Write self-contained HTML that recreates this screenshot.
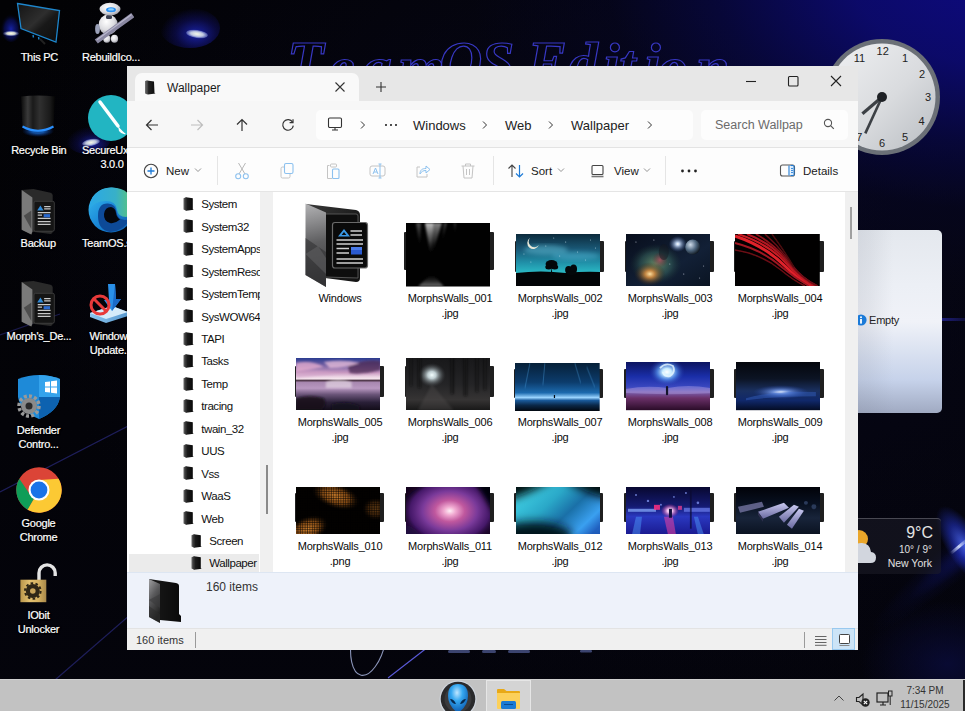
<!DOCTYPE html>
<html><head><meta charset="utf-8">
<style>
*{margin:0;padding:0;box-sizing:border-box}
html,body{width:965px;height:711px;overflow:hidden}
body{position:relative;font-family:"Liberation Sans",sans-serif;background:#020207}
.a{position:absolute}
#bg{left:0;top:0;width:965px;height:711px;
 background:
  radial-gradient(ellipse 540px 320px at 1010px -30px, rgba(14,10,130,1) 0%, rgba(12,10,112,0.92) 30%, rgba(8,8,72,0.7) 55%, rgba(6,6,40,0.4) 75%, rgba(0,0,0,0) 100%),
  radial-gradient(ellipse 700px 500px at 700px 200px, rgba(10,10,40,0.6) 0%, rgba(0,0,0,0) 100%),
  linear-gradient(180deg,#020204 0%,#030308 60%,#04040c 100%);}
.dl{color:#fff;font-size:11px;letter-spacing:-0.25px;text-align:center;line-height:14px;text-shadow:0 0 2px #000,1px 1px 1px #000;white-space:nowrap;-webkit-text-stroke:0.2px #fff}
#win{left:127px;top:66px;width:731px;height:584px;background:#fff;overflow:hidden}
#title{left:0;top:0;width:731px;height:35px;background:#e7e7e7}
#tab{left:8px;top:7px;width:224px;height:29px;background:#f9f9f9;border-radius:7px 7px 0 0}
#nav{left:0;top:35px;width:731px;height:47px;background:#f7f7f7;border-bottom:1px solid #e3e3e3}
#addr{left:189px;top:44px;width:377px;height:30px;background:#fdfdfd;border-radius:5px}
#search{left:574px;top:44px;width:147px;height:30px;background:#fdfdfd;border-radius:5px}
#cmd{left:0;top:82px;width:731px;height:44px;background:#fdfdfd;border-bottom:1px solid #e5e5e5}
.t{color:#1a1a1a;white-space:nowrap}
.lbl{width:100px;text-align:center;font-size:11px;line-height:15px;letter-spacing:-0.2px;color:#0a0a0a;padding-top:0.5px}
#navpane{left:0;top:126px;width:133px;height:380px;background:#fff;overflow:hidden}
#navtrack{left:133px;top:126px;width:13px;height:380px;background:#f0f0f0}
#content{left:147px;top:126px;width:571px;height:380px;background:#fff;overflow:hidden}
#ctrack{left:718px;top:126px;width:13px;height:380px;background:#f0f0f0}
#details{left:0;top:506px;width:731px;height:56px;background:#eef2fa;border-top:1px solid #dde6f2}
#status{left:0;top:562px;width:731px;height:22px;background:#f0f0f0;border-top:1px solid #e3e3e3}
#taskbar{left:0;top:679px;width:965px;height:32px;background:#c2c2c2;border-top:1px solid #d0d0d0}
</style></head>
<body>
<svg width="0" height="0" style="position:absolute">
 <defs>
  <linearGradient id="nfg" x1="0" x2="1" y1="0" y2="0"><stop offset="0" stop-color="#6a6a6a"/><stop offset="0.3" stop-color="#1e1e1e"/><stop offset="1" stop-color="#050505"/></linearGradient>
  <g id="nfold">
   <path d="M0.5 1.2 L3 0.3 L9.8 1.2 L9.8 12.3 L10.8 12.8 L3.2 13.8 L0.5 12.6 Z" fill="url(#nfg)"/>
   <path d="M3 0.5 L3.2 13.6" stroke="#3a3a3a" stroke-width="0.7"/>
  </g>
 </defs>
</svg>
<div id="bg" class="a"></div>


<!-- bottom-right streak -->
<div class="a" style="left:850px;top:545px;width:200px;height:40px;border-radius:50%;transform:rotate(-40deg);background:radial-gradient(ellipse at 80% 50%, rgba(35,50,220,0.75) 0%, rgba(20,28,150,0.4) 22%, rgba(12,16,90,0.15) 50%, rgba(0,0,0,0) 72%)"></div>
<div class="a" style="left:946px;top:500px;width:36px;height:90px;border-radius:50%;transform:rotate(-32deg);background:radial-gradient(ellipse at center, rgba(80,110,255,0.8) 0%, rgba(40,60,230,0.5) 35%, rgba(0,0,0,0) 70%)"></div>
<div class="a" style="left:948px;top:545px;width:22px;height:3px;transform:rotate(-40deg);background:linear-gradient(90deg,rgba(255,255,255,0),rgba(220,230,255,0.9),rgba(255,255,255,0))"></div>
<div class="a" style="left:860px;top:600px;width:110px;height:80px;background:radial-gradient(ellipse at 80% 80%, rgba(10,12,60,0.8), rgba(0,0,0,0) 70%)"></div>
<!-- wallpaper glow spots -->
<div class="a" style="left:160px;top:8px;width:60px;height:40px;border-radius:50%;background:radial-gradient(ellipse at 60% 65%, rgba(30,40,200,0.8) 0%, rgba(20,20,140,0.4) 40%, rgba(0,0,0,0) 70%)"></div>
<div class="a" style="left:186px;top:30px;width:22px;height:8px;border-radius:50%;transform:rotate(8deg);background:radial-gradient(ellipse at center, #f4f8e8 0%, rgba(220,230,240,0.85) 40%, rgba(120,140,255,0.3) 75%, rgba(0,0,0,0) 100%)"></div>
<div class="a" style="left:66px;top:126px;width:44px;height:28px;border-radius:50%;background:radial-gradient(ellipse at 60% 65%, rgba(30,40,200,0.7) 0%, rgba(20,20,140,0.3) 40%, rgba(0,0,0,0) 70%)"></div>
<div class="a" style="left:82px;top:139px;width:18px;height:7px;border-radius:50%;transform:rotate(-10deg);background:radial-gradient(ellipse at center, #f4f8e8 0%, rgba(220,230,240,0.85) 40%, rgba(120,140,255,0.3) 75%, rgba(0,0,0,0) 100%)"></div>
<!-- TeamOS outline text -->
<svg class="a" style="left:270px;top:20px" width="480" height="60" viewBox="0 0 480 60">
 <text font-family="Liberation Serif" font-style="italic" font-weight="bold" font-size="60" fill="none" stroke="#3838c4" stroke-width="1.2"><tspan x="17" y="62">T</tspan><tspan x="58" y="67">e</tspan><tspan x="92" y="67">a</tspan><tspan x="128" y="67">m</tspan><tspan x="169" y="62">O</tspan><tspan x="211" y="62">S</tspan><tspan x="257" y="62">E</tspan><tspan x="298" y="63">d</tspan><tspan x="333" y="64">i</tspan><tspan x="349" y="65">t</tspan><tspan x="374" y="64">i</tspan><tspan x="388" y="67">o</tspan><tspan x="426" y="67">n</tspan></text>
</svg>
<svg class="a" style="left:330px;top:600px" width="300" height="80" viewBox="0 0 300 80">
 <ellipse cx="39" cy="38" rx="17" ry="38" fill="none" stroke="#8a94b8" stroke-width="1.1" transform="rotate(12 39 38)"/>
 <path d="M58 78 L98 47" stroke="#5a5ad8" stroke-width="1.1"/>
 <g fill="#6a7ac0" opacity="0.55"><rect x="118" y="50" width="22" height="3" rx="1.5"/><rect x="152" y="50" width="14" height="3" rx="1.5"/><rect x="178" y="50" width="22" height="3" rx="1.5"/><rect x="250" y="50" width="12" height="2.5" rx="1.2"/></g>
</svg>
<svg class="a" style="left:0px;top:200px" width="130" height="500" viewBox="0 0 130 500">
 <path d="M0 135 L60 114" stroke="#1a1a4a" stroke-width="1.2"/>
 <path d="M0 292 L130 225" stroke="#1e1e5a" stroke-width="1.2"/>
 <path d="M55 480 L130 415" stroke="#1e1e5a" stroke-width="1.2"/>
</svg>
<!-- clock -->
<svg class="a" style="left:822px;top:37px" width="120" height="120" viewBox="-60 -60 120 120">
 <defs><linearGradient id="cf" x1="0" x2="1" y1="0" y2="1"><stop offset="0" stop-color="#f0f1f3"/><stop offset="0.55" stop-color="#d9dbde"/><stop offset="1" stop-color="#b9bdc2"/></linearGradient></defs>
 <circle r="58" fill="#6b7077"/>
 <circle r="53.5" fill="url(#cf)"/>
 <g font-family="Liberation Sans" font-size="11" fill="#222" text-anchor="middle" dominant-baseline="central">
  <text x="0.7" y="-46.3">12</text><text x="23" y="-39.4">1</text><text x="40" y="-22.7">2</text><text x="46" y="0">3</text>
  <text x="39.5" y="23.6">4</text><text x="23" y="40.4">5</text><text x="0" y="46.3">6</text><text x="-22.6" y="40.4">7</text>
  <text x="-39.5" y="23.6">8</text><text x="-46" y="0">9</text><text x="-40" y="-22.7">10</text><text x="-22.6" y="-39.4">11</text>
 </g>
 <path d="M0 0 L-19.6 16.7" stroke="#3c4045" stroke-width="3.2" stroke-linecap="butt"/>
 <path d="M0 0 L-16.7 36.4" stroke="#3c4045" stroke-width="2.6"/>
 <circle r="5" fill="#1e2125"/>
</svg>
<!-- empty gadget -->
<div class="a" style="left:820px;top:230px;width:122px;height:183px;border-radius:5px;background:linear-gradient(90deg,rgba(120,125,140,0.28) 0%,rgba(120,125,140,0.12) 40%,rgba(255,255,255,0) 60%),linear-gradient(180deg,#e4e8ee 0%,#eceff5 30%,#f0f2f8 50%,#d8e0f0 68%,#c6d2ea 82%,#a0aac2 100%)"></div>
<div class="a" style="left:942px;top:318px;width:23px;height:3px;background:linear-gradient(90deg,rgba(40,40,160,0.7),rgba(30,30,120,0.4))"></div>
<svg class="a" style="left:855px;top:314px" width="12" height="12" viewBox="0 0 12 12"><circle cx="6" cy="6" r="5.6" fill="#1a7ad8"/><rect x="5.1" y="5" width="1.8" height="4.6" fill="#fff"/><circle cx="6" cy="3.2" r="1" fill="#fff"/></svg>
<div class="a" style="left:869px;top:313px;font-size:11px;line-height:14px;color:#222;letter-spacing:-0.2px">Empty</div>
<!-- weather -->
<div class="a" style="left:830px;top:518px;width:111px;height:56px;border-radius:4px;background:rgba(30,30,40,0.55);border-top:1px solid rgba(110,110,120,0.6)"></div>
<svg class="a" style="left:842px;top:524px" width="40" height="40" viewBox="0 0 40 40">
 <circle cx="17" cy="15" r="9" fill="#eaa62a"/>
 <path d="M9 39 Q3 39 3 33 Q3 27 9.5 27 Q11.5 18.5 20 19 Q28 19.5 29 28 Q34 28.5 34 33.5 Q34 39 28.5 39 Z" fill="#d2d6de"/>
</svg>
<div class="a" style="left:880px;top:523px;width:53px;text-align:right;font-size:16px;line-height:20px;color:#e4e4e4">9&deg;C</div>
<div class="a" style="left:880px;top:544px;width:52px;text-align:right;font-size:10px;line-height:12px;color:#e0e0e0">10&deg; / 9&deg;</div>
<div class="a" style="left:870px;top:557px;width:62px;text-align:right;font-size:10.5px;line-height:13px;color:#e0e0e0">New York</div>
<div id="desk">
<svg class="a" style="left:0px;top:0px" width="64" height="46" viewBox="0 0 64 46">
 <defs><radialGradient id="glow1" cx="0.5" cy="0.5" r="0.5"><stop offset="0" stop-color="#fbfbe8"/><stop offset="0.5" stop-color="#e0e4d8" stop-opacity="0.9"/><stop offset="1" stop-color="#6070d0" stop-opacity="0"/></radialGradient>
 <radialGradient id="halo1" cx="0.5" cy="0.6" r="0.5"><stop offset="0" stop-color="#1a28c0" stop-opacity="0.85"/><stop offset="0.6" stop-color="#0c1480" stop-opacity="0.5"/><stop offset="1" stop-color="#000" stop-opacity="0"/></radialGradient>
 <linearGradient id="scr1" x1="0" x2="1" y1="0" y2="1"><stop offset="0" stop-color="#141414"/><stop offset="0.45" stop-color="#2e2e2e"/><stop offset="0.6" stop-color="#181818"/><stop offset="1" stop-color="#0c0c0c"/></linearGradient></defs>
 <ellipse cx="11" cy="26" rx="11" ry="16" fill="url(#halo1)"/><ellipse cx="11" cy="33.5" rx="8.5" ry="3" fill="url(#glow1)"/>
 <path d="M17.5 3.5 L59.5 10.5 L56 42 L21 28.5 Z" fill="url(#scr1)" stroke="#1e86cc" stroke-width="1.3"/>
 <path d="M33 35 L33.5 37.5 M38.5 37 L39 39.5" stroke="#1e86cc" stroke-width="1.4"/>
 <path d="M40 39 L45 44" stroke="#222" stroke-width="2"/>
</svg>
<div class="a dl" style="left:-0.7px;top:49.7px;width:80px">This PC</div>
<svg class="a" style="left:92px;top:1px" width="42" height="45" viewBox="0 0 42 45">
 <defs><radialGradient id="rbw" cx="0.4" cy="0.35" r="0.7"><stop offset="0" stop-color="#ffffff"/><stop offset="0.6" stop-color="#dcdce0"/><stop offset="1" stop-color="#9a9aa4"/></radialGradient></defs>
 <ellipse cx="14.8" cy="37.7" rx="3.6" ry="4" fill="url(#rbw)"/>
 <ellipse cx="22.5" cy="37.7" rx="3.6" ry="4" fill="url(#rbw)"/>
 <ellipse cx="16.2" cy="23.6" rx="9.5" ry="10" fill="url(#rbw)"/>
 <ellipse cx="5.5" cy="28" rx="2.4" ry="5" fill="#9aa0b8"/>
 <rect x="14" y="14" width="6" height="4" rx="1.5" fill="#3a3f50"/>
 <ellipse cx="18" cy="8.1" rx="10.5" ry="6.3" fill="url(#rbw)"/>
 <ellipse cx="19" cy="8.8" rx="5" ry="2.5" fill="#2a8ff0"/>
 <ellipse cx="19" cy="8.4" rx="3" ry="1.2" fill="#8ad0ff"/>
 <path d="M4.3 40.5 L40.8 14.1" stroke="#8a88a2" stroke-width="5.2"/>
 <path d="M5 38.8 L39.5 13.6" stroke="#b8b6cc" stroke-width="1.3"/>
</svg>
<div class="a dl" style="left:71.0px;top:49.7px;width:80px">RebuildIco...</div>
<svg class="a" style="left:18px;top:94px" width="40" height="46" viewBox="0 0 40 46">
 <defs><linearGradient id="rb1" x1="0" x2="1"><stop offset="0" stop-color="#0a0a0a"/><stop offset="0.2" stop-color="#3a3a3a"/><stop offset="0.35" stop-color="#1a1a1a"/><stop offset="0.55" stop-color="#303030"/><stop offset="0.85" stop-color="#1a1a1a"/><stop offset="1" stop-color="#050505"/></linearGradient>
 <radialGradient id="rbg" cx="0.5" cy="0.5" r="0.5"><stop offset="0.4" stop-color="#1a70e0"/><stop offset="1" stop-color="#0a3aa0" stop-opacity="0"/></radialGradient></defs>
 <ellipse cx="20" cy="37" rx="16" ry="6" fill="url(#rbg)" opacity="0.7"/>
 <path d="M3 2.5 Q20 0.5 37 2.5 L35.5 33 Q20 40 4.5 33 Z" fill="url(#rb1)"/>
 <path d="M4.5 32.5 Q20 41 35.5 32.5" fill="none" stroke="#2a90ff" stroke-width="2"/>
</svg>
<div class="a dl" style="left:-1.2px;top:143.3px;width:80px">Recycle Bin</div>
<svg class="a" style="left:88px;top:94px" width="48" height="48" viewBox="0 0 48 48">
 <circle cx="23" cy="24" r="23" fill="#22b5c2"/>
 <path d="M12 8 L30 32" stroke="#fff" stroke-width="3.5" stroke-linecap="round"/>
 <path d="M30 32 Q35 38 38 40 Q34 41 31 37 Z" fill="#fff"/>
</svg>
<div class="a dl" style="left:82px;top:143.3px;width:80px;text-align:left">SecureUxTheme</div><div class="a dl" style="left:72px;top:157.1px;width:80px">3.0.0</div>
<svg class="a" style="left:20px;top:189px" width="36" height="46" viewBox="0 0 65 86">
 <path d="M2 2 L24 0 L56 7 Q60 8 60 12 L60 80 Q60 84 56 84 L22 80 L20 85 L2 76 Z" fill="#2a2a2a"/>
 <path d="M2 2 L22 16 L22 80 L20 85 L2 76 Z" fill="#7a7a7a"/>
 <path d="M6 50 L20 40 L20 75 Z" fill="#3a3a3a" opacity="0.7"/>
 <rect x="25" y="23" width="38" height="56" rx="3" fill="#151515" stroke="#444" stroke-width="1.5"/>
 <path d="M31 40 L37 31 L43 40 Z" fill="#2f8ad8"/>
 <path d="M44 33H56M44 37H56M32 44H56M32 49H40M32 55H56M32 61H56M32 66H56" stroke="#c8c8c8" stroke-width="2.4"/>
 <rect x="43" y="47" width="12" height="6" fill="#2a6ad0"/>
</svg>
<div class="a dl" style="left:-1.8px;top:235.6px;width:80px">Backup</div>
<svg class="a" style="left:88px;top:186px" width="46" height="48" viewBox="0 0 46 48">
 <defs><linearGradient id="ed1" x1="0" x2="1" y1="0" y2="1"><stop offset="0" stop-color="#3ac0f0"/><stop offset="0.5" stop-color="#1a88d8"/><stop offset="1" stop-color="#0c58a8"/></linearGradient>
 <linearGradient id="ed2" x1="0" x2="1" y1="0" y2="0"><stop offset="0" stop-color="#2aa8e8"/><stop offset="0.6" stop-color="#38b0c8"/><stop offset="1" stop-color="#60c870"/></linearGradient></defs>
 <circle cx="23" cy="24" r="22.5" fill="url(#ed1)"/>
 <path d="M1 24 Q3 2 24 1.5 Q44 2 45.5 22 Q45 30 38 31 Q30 31 29 24 Q28 15 18 15 Q6 15 1 24Z" fill="url(#ed2)"/>
 <path d="M10 30 Q10 17 20 17.5 Q28 18 28.5 26 Q29 33 37 34 Q40 34 42 33 Q36 45 22 46 Q10 44 10 30Z" fill="#0d4a98"/>
 <path d="M16 28 Q17 21 23 21 Q27.5 22 28 27 Q28.5 31 32 33.5 Q27 38 22 37 Q15.5 35 16 28Z" fill="#05070c"/>
</svg>
<div class="a dl" style="left:71.0px;top:235.6px;width:80px">TeamOS.s...</div>
<svg class="a" style="left:20px;top:281px" width="36" height="46" viewBox="0 0 65 86">
 <path d="M2 2 L24 0 L56 7 Q60 8 60 12 L60 80 Q60 84 56 84 L22 80 L20 85 L2 76 Z" fill="#2a2a2a"/>
 <path d="M2 2 L22 16 L22 80 L20 85 L2 76 Z" fill="#7a7a7a"/>
 <path d="M6 50 L20 40 L20 75 Z" fill="#3a3a3a" opacity="0.7"/>
 <rect x="25" y="23" width="38" height="56" rx="3" fill="#151515" stroke="#444" stroke-width="1.5"/>
 <path d="M31 40 L37 31 L43 40 Z" fill="#2f8ad8"/>
 <path d="M44 33H56M44 37H56M32 44H56M32 49H40M32 55H56M32 61H56M32 66H56" stroke="#c8c8c8" stroke-width="2.4"/>
 <rect x="43" y="47" width="12" height="6" fill="#2a6ad0"/>
</svg>
<div class="a dl" style="left:-1.0px;top:328.5px;width:80px">Morph's_De...</div>
<svg class="a" style="left:88px;top:283px" width="42" height="42" viewBox="0 0 42 42">
 <defs><linearGradient id="wut" x1="0" x2="1"><stop offset="0" stop-color="#8ac4ee"/><stop offset="1" stop-color="#5a9ad0"/></linearGradient></defs>
 <path d="M2 30 L24 23 L40 29 L40 33 L18 40 L2 34 Z" fill="url(#wut)"/>
 <path d="M2 30 L24 23 L40 29 L18 36 Z" fill="#d6ecfa"/>
 <path d="M20 1 L27 1 L28 16 L33 16 L24 28 L16 17 L21 17 Z" fill="#2a90e8"/>
 <path d="M27 1 L28 16 L33 16 L24 28 Z" fill="#1a6ac8"/>
 <circle cx="12" cy="22" r="9" fill="none" stroke="#e83a3a" stroke-width="3"/>
 <path d="M5.8 15.8 L18.2 28.2" stroke="#e83a3a" stroke-width="3"/>
</svg>
<div class="a dl" style="left:71.0px;top:328.5px;width:80px">Windows<br>Update...</div>
<svg class="a" style="left:16px;top:373px" width="46" height="47" viewBox="0 0 46 47">
 <path d="M2 6 Q23 -2 44 6 L44 24 Q42 38 23 46 Q4 38 2 24 Z" fill="#1e8ad8"/>
 <path d="M23 2 Q34 2 44 6 L44 24 L23 24 Z" fill="#34a3ec"/>
 <path d="M23 24 L44 24 Q42 38 23 46 Z" fill="#0d62b0"/>
 <path d="M29 9 L34 8.5 L34 13.5 L29 13.5Z M35 8.3 L41 7.5 L41 13.5 L35 13.5Z M29 14.5 L34 14.5 L34 19.5 L29 19Z M35 14.5 L41 14.5 L41 20.5 L35 19.7Z" fill="#fff"/>
 <circle cx="13" cy="33" r="8" fill="#8a8a8a"/>
 <circle cx="13" cy="33" r="10" fill="none" stroke="#9a9a9a" stroke-width="3.5" stroke-dasharray="3 2.2"/>
 <circle cx="13" cy="33" r="3.5" fill="#2a2a2a"/>
</svg>
<div class="a dl" style="left:-1.5px;top:422.6px;width:80px">Defender<br>Contro...</div>
<svg class="a" style="left:16px;top:466.7px" width="46" height="46" viewBox="-23 -23 46 46">
 <circle r="22.7" fill="#db4437"/>
 <path d="M0 0 L-19.66 -11.35 A22.7 22.7 0 0 0 -11.35 19.66 Z" fill="#0f9d58"/>
 <path d="M0 0 L19.66 -11.35 A22.7 22.7 0 0 1 -11.35 19.66 Z" fill="#fcc934"/>
 <path d="M0 -10 L19.66 -11.35 L6.5 8 Z" fill="#fcc934"/>
 <path d="M-8.7 5 L-19.66 -11.35 L0 -10 Z" fill="#db4437"/>
 <circle r="10.5" fill="#fff"/>
 <circle r="8.4" fill="#1a73e8"/>
</svg>
<div class="a dl" style="left:-1.5px;top:515.8px;width:80px">Google<br>Chrome</div>
<svg class="a" style="left:18px;top:560px" width="42" height="44" viewBox="0 0 42 44">
 <defs><linearGradient id="gold" x1="0" x2="1"><stop offset="0" stop-color="#b8954a"/><stop offset="0.35" stop-color="#e2c070"/><stop offset="0.7" stop-color="#d4b060"/><stop offset="1" stop-color="#a8884a"/></linearGradient></defs>
 <path d="M21 20 L21 13 A8.1 8.1 0 0 1 37.2 13 L37.2 16" fill="none" stroke="#e4e4e4" stroke-width="3.4"/>
 <rect x="2.4" y="19.7" width="25.9" height="22.5" fill="url(#gold)"/>
 <circle cx="14.8" cy="31" r="7" fill="#2e2616"/>
 <circle cx="14.8" cy="31" r="7.8" fill="none" stroke="#2e2616" stroke-width="2" stroke-dasharray="2.6 2.3"/>
 <circle cx="14.8" cy="31" r="2.8" fill="#c8a45a"/>
</svg>
<div class="a dl" style="left:-1.5px;top:608px;width:80px">IObit<br>Unlocker</div>
</div>
<div id="win" class="a">
 <div id="title" class="a"></div>
 <div id="tab" class="a"></div>
 <div id="nav" class="a"></div>
 <div id="addr" class="a"></div>
 <div id="search" class="a"></div>
 <div id="cmd" class="a"></div>

 <!-- tab -->
 <svg class="a" style="left:17px;top:80-66px" width="0" height="0"></svg>
 <svg class="a" style="left:17px;top:14px" width="12" height="15" viewBox="0 0 12 15">
  <defs><linearGradient id="fg1" x1="0" x2="1"><stop offset="0" stop-color="#777"/><stop offset="0.35" stop-color="#222"/><stop offset="1" stop-color="#0a0a0a"/></linearGradient></defs>
  <path d="M1 1 L3 0.5 L10 1.5 L10.5 13 L11.5 13.5 L4 14.5 L1 13.5 Z" fill="url(#fg1)"/>
  <path d="M3 0.5 L3 14.3" stroke="#555" stroke-width="0.6"/>
 </svg>
 <div class="a t" style="left:40px;top:15px;font-size:12px;line-height:15px">Wallpaper</div>
 <svg class="a" style="left:207px;top:15px" width="12" height="12" viewBox="0 0 12 12"><path d="M1.5 1.5L10.5 10.5M10.5 1.5L1.5 10.5" stroke="#333" stroke-width="1.1"/></svg>
 <svg class="a" style="left:248px;top:15px" width="12" height="12" viewBox="0 0 12 12"><path d="M6 1V11M1 6H11" stroke="#333" stroke-width="1.1"/></svg>
 <!-- window controls -->
 <svg class="a" style="left:618px;top:9px" width="12" height="12" viewBox="0 0 12 12"><path d="M1 6.5H11" stroke="#222" stroke-width="1.1"/></svg>
 <svg class="a" style="left:660px;top:9px" width="12" height="12" viewBox="0 0 12 12"><rect x="1.5" y="1.5" width="9.5" height="9.5" rx="1" fill="none" stroke="#222" stroke-width="1.1"/></svg>
 <svg class="a" style="left:703px;top:9px" width="12" height="12" viewBox="0 0 12 12"><path d="M1 1L11 11M11 1L1 11" stroke="#222" stroke-width="1.1"/></svg>
 <!-- nav buttons -->
 <svg class="a" style="left:17px;top:51px" width="16" height="16" viewBox="0 0 16 16"><path d="M14 8H2.5M7.5 3L2.5 8L7.5 13" fill="none" stroke="#333" stroke-width="1.2"/></svg>
 <svg class="a" style="left:62px;top:51px" width="16" height="16" viewBox="0 0 16 16"><path d="M2 8H13.5M8.5 3L13.5 8L8.5 13" fill="none" stroke="#bdbdbd" stroke-width="1.2"/></svg>
 <svg class="a" style="left:107px;top:51px" width="16" height="16" viewBox="0 0 16 16"><path d="M8 14V2.5M3 7.5L8 2.5L13 7.5" fill="none" stroke="#333" stroke-width="1.2"/></svg>
 <svg class="a" style="left:153px;top:51px" width="16" height="16" viewBox="0 0 16 16"><path d="M12.6 5.2A5.3 5.3 0 1 0 13.3 8.6" fill="none" stroke="#333" stroke-width="1.2"/><path d="M13 2.2V5.6H9.6" fill="none" stroke="#333" stroke-width="1.2"/></svg>
 <!-- address -->
 <svg class="a" style="left:200px;top:50px" width="16" height="16" viewBox="0 0 16 16"><rect x="1.5" y="2" width="13" height="9.5" rx="1.2" fill="none" stroke="#333" stroke-width="1.1"/><path d="M5 14H11M8 11.5V14" stroke="#333" stroke-width="1.1"/></svg>
 <svg class="a" style="left:232px;top:54px" width="8" height="10" viewBox="0 0 8 10"><path d="M2 1.5L5.5 5L2 8.5" fill="none" stroke="#333" stroke-width="1"/></svg>
 <svg class="a" style="left:256px;top:57px" width="16" height="4" viewBox="0 0 16 4"><circle cx="3" cy="2" r="1.05" fill="#222"/><circle cx="8" cy="2" r="1.05" fill="#222"/><circle cx="13" cy="2" r="1.05" fill="#222"/></svg>
 <div class="a t" style="left:286px;top:51.7px;font-size:13px;line-height:16px;color:#222">Windows</div>
 <svg class="a" style="left:354px;top:54px" width="8" height="10" viewBox="0 0 8 10"><path d="M2 1.5L5.5 5L2 8.5" fill="none" stroke="#333" stroke-width="1"/></svg>
 <div class="a t" style="left:378px;top:51.7px;font-size:13px;line-height:16px;color:#222">Web</div>
 <svg class="a" style="left:420px;top:54px" width="8" height="10" viewBox="0 0 8 10"><path d="M2 1.5L5.5 5L2 8.5" fill="none" stroke="#333" stroke-width="1"/></svg>
 <div class="a t" style="left:444px;top:51.7px;font-size:13px;line-height:16px;color:#222">Wallpaper</div>
 <svg class="a" style="left:519px;top:54px" width="8" height="10" viewBox="0 0 8 10"><path d="M2 1.5L5.5 5L2 8.5" fill="none" stroke="#333" stroke-width="1"/></svg>
 <!-- search -->
 <div class="a t" style="left:588px;top:51px;font-size:12.5px;line-height:16px;color:#6b6b6b;width:88px;overflow:hidden">Search Wallpaper</div>
 <svg class="a" style="left:696px;top:52px" width="12" height="12" viewBox="0 0 12 12"><circle cx="5" cy="5" r="3.6" fill="none" stroke="#555" stroke-width="1.1"/><path d="M7.6 7.6L10.8 10.8" stroke="#555" stroke-width="1.2"/></svg>
 <!-- command bar -->
 <svg class="a" style="left:16px;top:97px" width="16" height="16" viewBox="0 0 16 16"><circle cx="8" cy="8" r="6.7" fill="none" stroke="#444" stroke-width="1.1"/><path d="M8 4.5V11.5M4.5 8H11.5" stroke="#1d7ad6" stroke-width="1.3"/></svg>
 <div class="a t" style="left:39px;top:98px;font-size:11.5px;line-height:14px">New</div>
 <svg class="a" style="left:67px;top:101px" width="8" height="6" viewBox="0 0 8 6"><path d="M1 1.5L4 4.5L7 1.5" fill="none" stroke="#888" stroke-width="0.9"/></svg>
 <div class="a" style="left:90px;top:90px;width:1px;height:29px;background:#e5e5e5"></div>
 <svg class="a" style="left:107px;top:96px" width="16" height="18" viewBox="0 0 16 18"><path d="M4.5 1L11 12M11.5 1L5 12" stroke="#b8b8b8" stroke-width="1"/><circle cx="4.2" cy="14.2" r="2.5" fill="none" stroke="#8cc1ef" stroke-width="1.1"/><circle cx="11.8" cy="14.2" r="2.5" fill="none" stroke="#8cc1ef" stroke-width="1.1"/></svg>
 <svg class="a" style="left:152px;top:96px" width="16" height="18" viewBox="0 0 16 18"><rect x="2" y="5" width="9" height="11" rx="1.5" fill="none" stroke="#c4c4c4" stroke-width="1"/><rect x="5.5" y="1.5" width="8.5" height="10" rx="1.5" fill="#fdfdfd" stroke="#8cc1ef" stroke-width="1.1"/></svg>
 <svg class="a" style="left:198px;top:96px" width="16" height="18" viewBox="0 0 16 18"><path d="M4.5 3.5H2.5V16.5H7" fill="none" stroke="#c4c4c4" stroke-width="1"/><rect x="5.5" y="2" width="6" height="3" rx="1" fill="none" stroke="#c4c4c4" stroke-width="1"/><rect x="7.5" y="7" width="6.5" height="9.5" rx="1" fill="none" stroke="#8cc1ef" stroke-width="1.1"/></svg>
 <svg class="a" style="left:242px;top:96px" width="18" height="18" viewBox="0 0 18 18"><rect x="1" y="4" width="15" height="10" rx="2" fill="none" stroke="#c4c4c4" stroke-width="1"/><path d="M4 12L6.5 6L9 12M5 10H8" fill="none" stroke="#8cc1ef" stroke-width="1"/><path d="M11 2V16M9.5 2H12.5M9.5 16H12.5" stroke="#8cc1ef" stroke-width="1"/></svg>
 <svg class="a" style="left:287px;top:96px" width="18" height="18" viewBox="0 0 18 18"><path d="M6 5H3V15H13V12" fill="none" stroke="#c4c4c4" stroke-width="1"/><path d="M6 12C6 8 8 6.5 12 6.5V4L16 7.5L12 11V8.5C9 8.5 7.5 9.5 6 12Z" fill="none" stroke="#8cc1ef" stroke-width="1"/></svg>
 <svg class="a" style="left:333px;top:96px" width="16" height="18" viewBox="0 0 16 18"><path d="M1.5 4H14.5M5.5 4V2H10.5V4M3 4L4 16H12L13 4M6.5 7V13M9.5 7V13" fill="none" stroke="#c4c4c4" stroke-width="1"/></svg>
 <div class="a" style="left:366px;top:90px;width:1px;height:29px;background:#e5e5e5"></div>
 <svg class="a" style="left:380px;top:96px" width="18" height="18" viewBox="0 0 18 18"><path d="M5 15V3M1.5 6.5L5 3L8.5 6.5" fill="none" stroke="#444" stroke-width="1.1"/><path d="M12.5 3V15M9 11.5L12.5 15L16 11.5" fill="none" stroke="#1d7ad6" stroke-width="1.2"/></svg>
 <div class="a t" style="left:404px;top:98px;font-size:11.5px;line-height:14px">Sort</div>
 <svg class="a" style="left:430px;top:101px" width="8" height="6" viewBox="0 0 8 6"><path d="M1 1.5L4 4.5L7 1.5" fill="none" stroke="#888" stroke-width="0.9"/></svg>
 <svg class="a" style="left:463px;top:97px" width="16" height="16" viewBox="0 0 16 16"><rect x="2" y="2.5" width="11" height="9" rx="1" fill="none" stroke="#444" stroke-width="1.1"/><path d="M1.5 13.5H13.5" stroke="#777" stroke-width="1.6"/></svg>
 <div class="a t" style="left:487px;top:98px;font-size:11.5px;line-height:14px">View</div>
 <svg class="a" style="left:516px;top:101px" width="8" height="6" viewBox="0 0 8 6"><path d="M1 1.5L4 4.5L7 1.5" fill="none" stroke="#888" stroke-width="0.9"/></svg>
 <div class="a" style="left:538px;top:90px;width:1px;height:29px;background:#e5e5e5"></div>
 <svg class="a" style="left:553px;top:103px" width="18" height="4" viewBox="0 0 18 4"><circle cx="2.5" cy="2" r="1.4" fill="#222"/><circle cx="9" cy="2" r="1.4" fill="#222"/><circle cx="15.5" cy="2" r="1.4" fill="#222"/></svg>
 <svg class="a" style="left:652px;top:97px" width="18" height="16" viewBox="0 0 18 16"><rect x="1.5" y="2" width="14" height="11" rx="2" fill="none" stroke="#555" stroke-width="1.1"/><path d="M10 2.5V12.5" stroke="#1d7ad6" stroke-width="1.1"/><path d="M11.5 2.5H14Q15 2.5 15 4V11.5Q15 12.5 14 12.5H11.5" fill="#d8eafb" stroke="#1d7ad6" stroke-width="1"/><path d="M12 5.5H14M12 7.5H14M12 9.5H14" stroke="#1d7ad6" stroke-width="0.8"/></svg>
 <div class="a t" style="left:676px;top:98px;font-size:11.5px;line-height:14px">Details</div>
 <div id="navpane" class="a">
<div class="a" style="left:2px;top:361.5px;width:130px;height:22px;background:#ebebeb"></div>
<svg class="a" style="left:55.5px;top:4.9px" width="11" height="14" viewBox="0 0 11 14"><use href="#nfold"/></svg>
<div class="a t" style="left:74.3px;top:5.2px;font-size:11.5px;line-height:15px;letter-spacing:-0.45px;color:#111">System</div>
<svg class="a" style="left:55.5px;top:27.3px" width="11" height="14" viewBox="0 0 11 14"><use href="#nfold"/></svg>
<div class="a t" style="left:74.3px;top:27.6px;font-size:11.5px;line-height:15px;letter-spacing:-0.45px;color:#111">System32</div>
<svg class="a" style="left:55.5px;top:49.8px" width="11" height="14" viewBox="0 0 11 14"><use href="#nfold"/></svg>
<div class="a t" style="left:74.3px;top:50.1px;font-size:11.5px;line-height:15px;letter-spacing:-0.45px;color:#111">SystemApps</div>
<svg class="a" style="left:55.5px;top:72.2px" width="11" height="14" viewBox="0 0 11 14"><use href="#nfold"/></svg>
<div class="a t" style="left:74.3px;top:72.6px;font-size:11.5px;line-height:15px;letter-spacing:-0.45px;color:#111">SystemResources</div>
<svg class="a" style="left:55.5px;top:94.7px" width="11" height="14" viewBox="0 0 11 14"><use href="#nfold"/></svg>
<div class="a t" style="left:74.3px;top:95.0px;font-size:11.5px;line-height:15px;letter-spacing:-0.45px;color:#111">SystemTemp</div>
<svg class="a" style="left:55.5px;top:117.2px" width="11" height="14" viewBox="0 0 11 14"><use href="#nfold"/></svg>
<div class="a t" style="left:74.3px;top:117.5px;font-size:11.5px;line-height:15px;letter-spacing:-0.45px;color:#111">SysWOW64</div>
<svg class="a" style="left:55.5px;top:139.6px" width="11" height="14" viewBox="0 0 11 14"><use href="#nfold"/></svg>
<div class="a t" style="left:74.3px;top:139.9px;font-size:11.5px;line-height:15px;letter-spacing:-0.45px;color:#111">TAPI</div>
<svg class="a" style="left:55.5px;top:162.1px" width="11" height="14" viewBox="0 0 11 14"><use href="#nfold"/></svg>
<div class="a t" style="left:74.3px;top:162.4px;font-size:11.5px;line-height:15px;letter-spacing:-0.45px;color:#111">Tasks</div>
<svg class="a" style="left:55.5px;top:184.5px" width="11" height="14" viewBox="0 0 11 14"><use href="#nfold"/></svg>
<div class="a t" style="left:74.3px;top:184.8px;font-size:11.5px;line-height:15px;letter-spacing:-0.45px;color:#111">Temp</div>
<svg class="a" style="left:55.5px;top:206.9px" width="11" height="14" viewBox="0 0 11 14"><use href="#nfold"/></svg>
<div class="a t" style="left:74.3px;top:207.2px;font-size:11.5px;line-height:15px;letter-spacing:-0.45px;color:#111">tracing</div>
<svg class="a" style="left:55.5px;top:229.4px" width="11" height="14" viewBox="0 0 11 14"><use href="#nfold"/></svg>
<div class="a t" style="left:74.3px;top:229.7px;font-size:11.5px;line-height:15px;letter-spacing:-0.45px;color:#111">twain_32</div>
<svg class="a" style="left:55.5px;top:251.9px" width="11" height="14" viewBox="0 0 11 14"><use href="#nfold"/></svg>
<div class="a t" style="left:74.3px;top:252.2px;font-size:11.5px;line-height:15px;letter-spacing:-0.45px;color:#111">UUS</div>
<svg class="a" style="left:55.5px;top:274.3px" width="11" height="14" viewBox="0 0 11 14"><use href="#nfold"/></svg>
<div class="a t" style="left:74.3px;top:274.6px;font-size:11.5px;line-height:15px;letter-spacing:-0.45px;color:#111">Vss</div>
<svg class="a" style="left:55.5px;top:296.8px" width="11" height="14" viewBox="0 0 11 14"><use href="#nfold"/></svg>
<div class="a t" style="left:74.3px;top:297.0px;font-size:11.5px;line-height:15px;letter-spacing:-0.45px;color:#111">WaaS</div>
<svg class="a" style="left:55.5px;top:319.2px" width="11" height="14" viewBox="0 0 11 14"><use href="#nfold"/></svg>
<div class="a t" style="left:74.3px;top:319.5px;font-size:11.5px;line-height:15px;letter-spacing:-0.45px;color:#111">Web</div>
<svg class="a" style="left:63.5px;top:341.6px" width="11" height="14" viewBox="0 0 11 14"><use href="#nfold"/></svg>
<div class="a t" style="left:82.3px;top:341.9px;font-size:11.5px;line-height:15px;letter-spacing:-0.45px;color:#111">Screen</div>
<svg class="a" style="left:63.5px;top:364.1px" width="11" height="14" viewBox="0 0 11 14"><use href="#nfold"/></svg>
<div class="a t" style="left:82.3px;top:364.4px;font-size:11.5px;line-height:15px;letter-spacing:-0.45px;color:#111">Wallpaper</div>
</div>
 <div id="navtrack" class="a"><div class="a" style="left:6px;top:273px;width:1.5px;height:49px;background:#8a8a8a"></div></div>
 <div id="content" class="a">
<svg class="a" style="left:24px;top:6px" width="80" height="95" viewBox="0 0 80 95">
 <defs>
  <linearGradient id="wfl" gradientUnits="userSpaceOnUse" x1="7" y1="5" x2="24" y2="85"><stop offset="0" stop-color="#b4b4b6"/><stop offset="0.25" stop-color="#8a8a8c"/><stop offset="0.5" stop-color="#5e5e60"/><stop offset="0.8" stop-color="#48484a"/><stop offset="1" stop-color="#3a3a3c"/></linearGradient>
  <linearGradient id="wfb" x1="0" x2="1" y1="0" y2="1"><stop offset="0" stop-color="#3a3a3a"/><stop offset="0.5" stop-color="#1e1e1e"/><stop offset="1" stop-color="#121212"/></linearGradient>
 </defs>
 <path d="M8 6 L58 12 Q62 13 62 17 L62 80 Q62 84 58 84 L27 80 Z" fill="url(#wfb)"/>
 <path d="M27 16 L58 16 Q60 16 60 18 L60 80 L27 79 Z" fill="#0e0e0e" stroke="#5a5a5a" stroke-width="0.9"/>
 <path d="M7.5 5.5 L28 14.5 L28 89 L7.5 77 Z" fill="url(#wfl)"/>
 <path d="M7.5 40 L28 54 L28 89 L7.5 77 Z" fill="#2e2e30" opacity="0.55"/>
 <path d="M7.5 56 L20 48 L28 60 L28 76 Z" fill="#6a6a6c" opacity="0.45"/>
 <rect x="34.5" y="24.5" width="35" height="45.5" rx="2.5" fill="#0a0a0a" stroke="#6a6a6a" stroke-width="1.2"/>
 <path d="M40 38.5 L46 31 L52 38.5 Z M43.6 37 L46 34 L48.4 37 Z" fill="#3a9ae8" fill-rule="evenodd"/>
 <g stroke="#d0d0d0" stroke-width="1.6">
  <path d="M52.5 33H64M52.5 37H64M38.5 42H65M38.5 46H65M38.5 50.5H51M38.5 55H51M38.5 61H65M38.5 65H65"/>
 </g>
 <rect x="53" y="49" width="11" height="7.5" fill="#2a5ad0"/>
 <rect x="53" y="49" width="11" height="3" fill="#4a7ae8"/>
</svg>
<div class="a t lbl" style="left:16px;top:98.10000000000002px">Windows</div>
<div class="a" style="left:130.4px;top:39.9px;width:89.5px;height:38.1px;background:#1f1f1f;border-radius:1px"></div>
<svg class="a" style="left:131.6px;top:31.0px" width="84.9" height="63.5" viewBox="0 0 85 63" preserveAspectRatio="none">
<defs>
<linearGradient id="t1a" x1="0" y1="0" x2="0" y2="1"><stop offset="0" stop-color="#d8d8d8" stop-opacity="0.9"/><stop offset="0.5" stop-color="#888" stop-opacity="0.5"/><stop offset="1" stop-color="#000" stop-opacity="0"/></linearGradient>
<linearGradient id="t1b" x1="0" y1="1" x2="0" y2="0"><stop offset="0" stop-color="#999" stop-opacity="0.75"/><stop offset="1" stop-color="#000" stop-opacity="0"/></linearGradient>
<filter id="bl1" x="-50%" y="-50%" width="200%" height="200%"><feGaussianBlur stdDeviation="1.2"/></filter>
</defs>
<rect width="85" height="63" fill="#010101"/>
<g filter="url(#bl1)">
<path d="M19 0 L27 0 L25 35 Z" fill="url(#t1a)"/>
<path d="M26 0 L36 0 L26 32 Z" fill="url(#t1a)" opacity="0.7"/>
<path d="M10 0 L15 0 L14 26 Z" fill="url(#t1a)" opacity="0.4"/>
<path d="M38 0 L41 0 L36 20 Z" fill="url(#t1a)" opacity="0.35"/>
<path d="M48 0 L50 0 L49 12 Z" fill="url(#t1a)" opacity="0.3"/>
<path d="M12 63 L26 50 L38 63 Z" fill="url(#t1b)"/>
</g></svg>
<div class="a t lbl" style="left:126.0px;top:98.1px">MorphsWalls_001<br>.jpg</div>
<div class="a" style="left:240.7px;top:49.3px;width:89.0px;height:31.2px;background:#1f1f1f;border-radius:1px"></div>
<svg class="a" style="left:241.9px;top:42.0px" width="84.4" height="52.0" viewBox="0 0 85 52" preserveAspectRatio="none">
<defs>
<linearGradient id="t2a" x1="0" y1="0" x2="0" y2="1"><stop offset="0" stop-color="#0c2a3c"/><stop offset="0.3" stop-color="#1a5a78"/><stop offset="0.55" stop-color="#2090a8"/><stop offset="0.74" stop-color="#2ab8c4"/></linearGradient>
<filter id="bl2"><feGaussianBlur stdDeviation="0.5"/></filter>
<filter id="bl2b"><feGaussianBlur stdDeviation="2"/></filter>
</defs>
<rect width="85" height="52" fill="url(#t2a)"/>
<g filter="url(#bl2b)" opacity="0.5"><ellipse cx="30" cy="16" rx="22" ry="5" fill="#60c0d8"/><ellipse cx="60" cy="22" rx="24" ry="4" fill="#50b0d0"/></g>
<g fill="#d8f0f8" opacity="0.7"><circle cx="8" cy="20" r="0.5"/><circle cx="30" cy="12" r="0.5"/><circle cx="50" cy="8" r="0.6"/><circle cx="62" cy="18" r="0.5"/><circle cx="75" cy="6" r="0.5"/><circle cx="44" cy="22" r="0.5"/><circle cx="15" cy="28" r="0.5"/><circle cx="70" cy="26" r="0.5"/><circle cx="38" cy="4" r="0.5"/><circle cx="80" cy="14" r="0.5"/></g>
<path d="M14 4 A6 6 0 1 0 23 11 A5 5 0 1 1 14 4Z" fill="#e8e8d8" filter="url(#bl2)"/>
<path d="M0 39 Q25 36 50 39 Q70 37 85 38 L85 52 L0 52Z" fill="#020406"/>
<g fill="#03070a">
<path d="M35 40 L35.8 33 L36.6 40Z"/><ellipse cx="35.8" cy="30" rx="6" ry="4"/><ellipse cx="33" cy="33" rx="3.5" ry="2.5"/><ellipse cx="39" cy="33" rx="3.5" ry="2.5"/>
<ellipse cx="53" cy="36" rx="3.5" ry="4"/><ellipse cx="58" cy="35" rx="3.5" ry="4.5"/><ellipse cx="56" cy="39" rx="5" ry="2"/>
</g></svg>
<div class="a t lbl" style="left:236.0px;top:98.1px">MorphsWalls_002<br>.jpg</div>
<div class="a" style="left:350.6px;top:49.3px;width:89.2px;height:31.2px;background:#1f1f1f;border-radius:1px"></div>
<svg class="a" style="left:351.8px;top:42.0px" width="84.6" height="52.0" viewBox="0 0 85 52" preserveAspectRatio="none">
<defs>
<radialGradient id="t3a" cx="0.5" cy="0.5" r="0.5"><stop offset="0" stop-color="#ffe0a0"/><stop offset="0.3" stop-color="#d08a40" stop-opacity="0.9"/><stop offset="1" stop-color="#302010" stop-opacity="0"/></radialGradient>
<radialGradient id="t3b" cx="0.5" cy="0.5" r="0.5"><stop offset="0" stop-color="#7aa070" stop-opacity="0.85"/><stop offset="0.6" stop-color="#3a6a60" stop-opacity="0.5"/><stop offset="1" stop-color="#203a30" stop-opacity="0"/></radialGradient>
<radialGradient id="t3c" cx="0.5" cy="0.5" r="0.5"><stop offset="0" stop-color="#fff"/><stop offset="0.2" stop-color="#d0e4ff" stop-opacity="0.9"/><stop offset="1" stop-color="#4060a0" stop-opacity="0"/></radialGradient>
<radialGradient id="t3d" cx="0.35" cy="0.35" r="0.7"><stop offset="0" stop-color="#d0dcea"/><stop offset="0.55" stop-color="#506880"/><stop offset="1" stop-color="#101820"/></radialGradient>
<radialGradient id="t3f" cx="0.5" cy="0.5" r="0.5"><stop offset="0" stop-color="#c04a60" stop-opacity="0.7"/><stop offset="1" stop-color="#601020" stop-opacity="0"/></radialGradient>
<linearGradient id="t3e" x1="0" y1="0" x2="1" y2="1"><stop offset="0" stop-color="#080e1c"/><stop offset="0.6" stop-color="#122036"/><stop offset="1" stop-color="#0a1422"/></linearGradient>
</defs>
<rect width="85" height="52" fill="url(#t3e)"/>
<ellipse cx="30" cy="30" rx="26" ry="20" fill="url(#t3b)"/>
<ellipse cx="24" cy="40" rx="16" ry="12" fill="url(#t3a)"/>
<ellipse cx="34" cy="26" rx="8" ry="8" fill="url(#t3f)"/>
<ellipse cx="38" cy="18" rx="5" ry="8" fill="#141820" opacity="0.5"/>
<ellipse cx="52" cy="10" rx="9" ry="8" fill="url(#t3c)"/>
<circle cx="67" cy="13" r="7.5" fill="url(#t3d)"/>
<g fill="#e8eeff" opacity="0.7"><circle cx="10" cy="8" r="0.6"/><circle cx="78" cy="32" r="0.5"/><circle cx="58" cy="40" r="0.6"/><circle cx="28" cy="6" r="0.6"/><circle cx="44" cy="30" r="0.5"/><circle cx="74" cy="44" r="0.5"/></g></svg>
<div class="a t lbl" style="left:346.0px;top:98.1px">MorphsWalls_003<br>.jpg</div>
<div class="a" style="left:460.2px;top:49.3px;width:89.4px;height:31.2px;background:#1f1f1f;border-radius:1px"></div>
<svg class="a" style="left:461.4px;top:42.0px" width="84.8" height="52.0" viewBox="0 0 85 52" preserveAspectRatio="none">
<defs><filter id="bl4"><feGaussianBlur stdDeviation="0.45"/></filter></defs>
<rect width="85" height="52" fill="#010000"/>
<g fill="none" filter="url(#bl4)">
<path d="M0 2 Q30 12 50 32 Q62 44 76 52" stroke="#e0202a" stroke-width="3"/>
<path d="M3 0 Q34 10 52 30 Q64 43 78 52" stroke="#c81a24" stroke-width="2"/>
<path d="M12 0 Q38 10 54 30 Q66 43 80 52" stroke="#b01820" stroke-width="2"/>
<path d="M0 9 Q28 16 48 34 Q60 44 74 52" stroke="#a01620" stroke-width="2"/>
<path d="M21 0 Q42 12 56 31 Q67 44 82 52" stroke="#8a121a" stroke-width="1.8"/>
<path d="M30 0 Q46 14 58 32 Q68 45 83 52" stroke="#6a0e14" stroke-width="1.6"/>
<path d="M37 0 Q49 16 59 33" stroke="#4a0a10" stroke-width="1.5"/>
<path d="M0 16 Q26 20 46 36 Q58 46 70 52" stroke="#6a0e14" stroke-width="1.6"/>
</g></svg>
<div class="a t lbl" style="left:456.0px;top:98.1px">MorphsWalls_004<br>.jpg</div>
<div class="a" style="left:20.7px;top:173.6px;width:89.1px;height:31.3px;background:#1f1f1f;border-radius:1px"></div>
<svg class="a" style="left:21.9px;top:166.3px" width="84.5" height="52.2" viewBox="0 0 85 52" preserveAspectRatio="none">
<defs>
<linearGradient id="t5a" x1="0" y1="0" x2="0" y2="1"><stop offset="0" stop-color="#2a3c90"/><stop offset="0.12" stop-color="#6a5aa0"/><stop offset="0.28" stop-color="#c898c0"/><stop offset="0.36" stop-color="#ecd4e4"/><stop offset="0.4" stop-color="#f4e4ec"/><stop offset="0.43" stop-color="#50384a"/><stop offset="0.47" stop-color="#a888b0"/><stop offset="0.58" stop-color="#b898c0"/><stop offset="0.7" stop-color="#6a5478"/><stop offset="0.85" stop-color="#2a2038"/><stop offset="1" stop-color="#120c18"/></linearGradient>
<filter id="bl5"><feGaussianBlur stdDeviation="1.1"/></filter>
</defs>
<rect width="85" height="52" fill="url(#t5a)"/>
<g filter="url(#bl5)">
<path d="M0 5 Q16 2 28 9 Q14 12 0 14Z" fill="#e8b0d0" opacity="0.75"/>
<path d="M52 8 Q70 1 85 3 L85 12 Q66 17 54 15Z" fill="#4a2a52" opacity="0.75"/>
<path d="M28 4 Q48 1 64 5 Q50 10 34 10Z" fill="#f4c8e0" opacity="0.7"/>
<path d="M0 16 Q20 10 40 16 Q20 18 0 20Z" fill="#d0a0c8" opacity="0.6"/>
<path d="M30 24 Q42 18 56 24 L56 30 L30 30Z" fill="#f8f0f4" opacity="0.5"/>
<path d="M0 40 Q14 36 28 40 Q32 46 26 52 L0 52Z" fill="#140e18" opacity="0.85"/>
<path d="M36 46 Q52 42 64 48 L64 52 L36 52Z" fill="#140e18" opacity="0.7"/>
</g></svg>
<div class="a t lbl" style="left:16.0px;top:222.3px">MorphsWalls_005<br>.jpg</div>
<div class="a" style="left:130.6px;top:173.6px;width:89.2px;height:31.3px;background:#1f1f1f;border-radius:1px"></div>
<svg class="a" style="left:131.8px;top:166.3px" width="84.6" height="52.2" viewBox="0 0 85 52" preserveAspectRatio="none">
<defs>
<radialGradient id="t6a" cx="0.5" cy="0.5" r="0.5"><stop offset="0" stop-color="#f4ffff"/><stop offset="0.3" stop-color="#d0e0e4" stop-opacity="0.9"/><stop offset="1" stop-color="#404448" stop-opacity="0"/></radialGradient>
<linearGradient id="t6b" x1="0" y1="0" x2="0" y2="1"><stop offset="0" stop-color="#18181a"/><stop offset="0.5" stop-color="#242426"/><stop offset="0.8" stop-color="#363434"/><stop offset="1" stop-color="#181818"/></linearGradient>
<filter id="bl6"><feGaussianBlur stdDeviation="1.3"/></filter>
</defs>
<rect width="85" height="52" fill="url(#t6b)"/>
<ellipse cx="26" cy="17" rx="14" ry="12" fill="url(#t6a)"/>
<path d="M12 52 Q22 34 26 26 Q32 34 48 52Z" fill="#5a5656" opacity="0.3" filter="url(#bl6)"/>
<g fill="#080808" opacity="0.6" filter="url(#bl6)"><rect x="12" y="0" width="3" height="30"/><rect x="45" y="0" width="3" height="36"/><rect x="58" y="0" width="3.5" height="38"/><rect x="70" y="0" width="2.5" height="34"/><rect x="4" y="0" width="2" height="28"/><rect x="78" y="0" width="2.5" height="32"/></g></svg>
<div class="a t lbl" style="left:126.0px;top:222.3px">MorphsWalls_006<br>.jpg</div>
<div class="a" style="left:240.2px;top:177.2px;width:89.3px;height:28.8px;background:#1f1f1f;border-radius:1px"></div>
<svg class="a" style="left:241.4px;top:170.5px" width="84.7" height="48.0" viewBox="0 0 85 48" preserveAspectRatio="none">
<defs>
<linearGradient id="t7a" x1="0" y1="0" x2="0" y2="1"><stop offset="0" stop-color="#062038"/><stop offset="0.4" stop-color="#0c3c6c"/><stop offset="0.62" stop-color="#1c6aae"/><stop offset="0.72" stop-color="#9ad4ff"/><stop offset="0.78" stop-color="#1a5a9a"/><stop offset="0.88" stop-color="#0a2848"/><stop offset="1" stop-color="#020810"/></linearGradient>
<filter id="bl7"><feGaussianBlur stdDeviation="0.8"/></filter>
</defs>
<rect width="85" height="48" fill="url(#t7a)"/>
<g stroke="#4aa0e0" stroke-width="0.8" opacity="0.5" filter="url(#bl7)"><path d="M15 0 L10 25"/><path d="M30 0 L28 22"/><path d="M60 0 L66 20"/><path d="M72 4 L80 24"/></g>
<rect x="39" y="32" width="1.2" height="3" fill="#020810"/></svg>
<div class="a t lbl" style="left:236.0px;top:222.3px">MorphsWalls_007<br>.jpg</div>
<div class="a" style="left:350.4px;top:177.1px;width:89.5px;height:28.9px;background:#1f1f1f;border-radius:1px"></div>
<svg class="a" style="left:351.6px;top:170.4px" width="84.9" height="48.2" viewBox="0 0 85 48" preserveAspectRatio="none">
<defs>
<linearGradient id="t8a" x1="0" y1="0" x2="0" y2="1"><stop offset="0" stop-color="#0c1460"/><stop offset="0.3" stop-color="#1a2ea8"/><stop offset="0.52" stop-color="#3a48c0"/><stop offset="0.62" stop-color="#7a60b0"/><stop offset="0.75" stop-color="#6a3068"/><stop offset="1" stop-color="#2a0c28"/></linearGradient>
<radialGradient id="t8b" cx="0.5" cy="0.5" r="0.5"><stop offset="0" stop-color="#ffffff"/><stop offset="0.25" stop-color="#c8ecff"/><stop offset="0.55" stop-color="#5a9af0" stop-opacity="0.7"/><stop offset="1" stop-color="#2030a0" stop-opacity="0"/></radialGradient>
</defs>
<rect width="85" height="48" fill="url(#t8a)"/>
<ellipse cx="41" cy="10" rx="18" ry="14" fill="url(#t8b)"/>
<path d="M34 6 Q40 0 47 4 Q50 10 44 14 Q38 15 37 10" fill="none" stroke="#e8f8ff" stroke-width="1.8" opacity="0.8"/>
<path d="M0 27 Q20 23 42 26 Q62 22 85 26 L85 31 Q42 33 0 31Z" fill="#b8a8e8" opacity="0.4"/>
<rect x="40" y="24" width="2.2" height="9" rx="1" fill="#14142a"/></svg>
<div class="a t lbl" style="left:346.0px;top:222.3px">MorphsWalls_008<br>.jpg</div>
<div class="a" style="left:460.4px;top:177.1px;width:89.5px;height:28.9px;background:#1f1f1f;border-radius:1px"></div>
<svg class="a" style="left:461.6px;top:170.4px" width="84.9" height="48.2" viewBox="0 0 85 48" preserveAspectRatio="none">
<defs>
<linearGradient id="t9a" x1="0" y1="0" x2="0" y2="1"><stop offset="0" stop-color="#04060c"/><stop offset="0.35" stop-color="#0c1424"/><stop offset="0.6" stop-color="#1a3060"/><stop offset="0.8" stop-color="#10286a"/><stop offset="1" stop-color="#040c24"/></linearGradient>
<radialGradient id="t9b" cx="0.5" cy="0.5" r="0.5"><stop offset="0" stop-color="#e8f0ff"/><stop offset="0.3" stop-color="#7aa0f0" stop-opacity="0.8"/><stop offset="1" stop-color="#2040a0" stop-opacity="0"/></radialGradient>
</defs>
<rect width="85" height="48" fill="url(#t9a)"/>
<ellipse cx="45" cy="30" rx="28" ry="7" fill="url(#t9b)"/>
<path d="M10 36 Q40 28 80 30 L80 34 Q40 34 10 38Z" fill="#3a6ad0" opacity="0.4"/></svg>
<div class="a t lbl" style="left:456.0px;top:222.3px">MorphsWalls_009<br>.jpg</div>
<div class="a" style="left:20.7px;top:301.3px;width:89.1px;height:28.7px;background:#1f1f1f;border-radius:1px"></div>
<svg class="a" style="left:21.9px;top:294.6px" width="84.5" height="47.9" viewBox="0 0 85 48" preserveAspectRatio="none">
<defs>
<radialGradient id="t10a" cx="0.5" cy="0.5" r="0.5"><stop offset="0" stop-color="#e08a30"/><stop offset="0.55" stop-color="#a05a18" stop-opacity="0.85"/><stop offset="1" stop-color="#000" stop-opacity="0"/></radialGradient>
<pattern id="dots" width="2.4" height="2.4" patternUnits="userSpaceOnUse"><rect x="1.5" width="0.9" height="2.4" fill="#000" opacity="0.55"/><rect y="1.5" width="2.4" height="0.9" fill="#000" opacity="0.55"/></pattern>
</defs>
<rect width="85" height="48" fill="#030100"/>
<ellipse cx="40" cy="9" rx="26" ry="13" fill="url(#t10a)" transform="rotate(18 40 9)"/>
<ellipse cx="12" cy="42" rx="22" ry="13" fill="url(#t10a)" transform="rotate(-20 12 42)"/>
<ellipse cx="80" cy="22" rx="14" ry="12" fill="url(#t10a)" opacity="0.45"/>
<rect width="85" height="48" fill="url(#dots)"/></svg>
<div class="a t lbl" style="left:16.0px;top:346.5px">MorphsWalls_010<br>.png</div>
<div class="a" style="left:130.6px;top:301.3px;width:89.2px;height:28.7px;background:#1f1f1f;border-radius:1px"></div>
<svg class="a" style="left:131.8px;top:294.6px" width="84.6" height="47.9" viewBox="0 0 85 48" preserveAspectRatio="none">
<defs>
<radialGradient id="t11a" cx="0.5" cy="0.5" r="0.5"><stop offset="0" stop-color="#fff0f6"/><stop offset="0.12" stop-color="#f0a8d0"/><stop offset="0.3" stop-color="#c0589e"/><stop offset="0.55" stop-color="#7a3a9a"/><stop offset="0.8" stop-color="#4a1a70" stop-opacity="0.9"/><stop offset="1" stop-color="#200830" stop-opacity="0"/></radialGradient>
<filter id="bl11"><feGaussianBlur stdDeviation="2.5"/></filter>
</defs>
<rect width="85" height="48" fill="#1a0628"/>
<ellipse cx="44" cy="24" rx="50" ry="36" fill="url(#t11a)"/>
<g filter="url(#bl11)">
<path d="M70 -5 L95 -5 L95 40 Q85 20 70 -5Z" fill="#05020a"/>
<path d="M-5 -5 L20 -5 Q5 5 -5 15Z" fill="#0a0418" opacity="0.8"/>
<path d="M-5 36 Q10 40 20 53 L-5 53Z" fill="#2a1050" opacity="0.6"/>
</g></svg>
<div class="a t lbl" style="left:126.0px;top:346.5px">MorphsWalls_011<br>.jpg</div>
<div class="a" style="left:240.3px;top:301.3px;width:89.2px;height:28.7px;background:#1f1f1f;border-radius:1px"></div>
<svg class="a" style="left:241.5px;top:294.6px" width="84.6" height="47.9" viewBox="0 0 85 48" preserveAspectRatio="none">
<defs>
<linearGradient id="t12a" x1="0" y1="0.2" x2="1" y2="0.8"><stop offset="0" stop-color="#40d0e4"/><stop offset="0.35" stop-color="#2aa8c8"/><stop offset="0.6" stop-color="#1a70a8"/><stop offset="0.85" stop-color="#3aa0f0"/><stop offset="1" stop-color="#2060c0"/></linearGradient>
<filter id="bl12" x="-30%" y="-30%" width="160%" height="160%"><feGaussianBlur stdDeviation="5"/></filter>
</defs>
<rect width="85" height="48" fill="url(#t12a)"/>
<g filter="url(#bl12)">
<path d="M-10 -10 L40 -10 Q20 4 -10 14Z" fill="#020a10"/>
<path d="M45 -10 L95 -10 L95 12 Q70 8 45 -10Z" fill="#03080e"/>
<path d="M-10 38 Q30 30 55 44 L55 60 L-10 60Z" fill="#04121c"/>
<path d="M60 60 L95 60 L95 50 Q80 54 60 60Z" fill="#0a1a40"/>
</g></svg>
<div class="a t lbl" style="left:236.0px;top:346.5px">MorphsWalls_012<br>.jpg</div>
<div class="a" style="left:350.4px;top:301.4px;width:89.5px;height:28.6px;background:#1f1f1f;border-radius:1px"></div>
<svg class="a" style="left:351.6px;top:294.7px" width="84.9" height="47.6" viewBox="0 0 85 48" preserveAspectRatio="none">
<defs>
<linearGradient id="t13a" x1="0" y1="0" x2="0" y2="1"><stop offset="0" stop-color="#080830"/><stop offset="0.4" stop-color="#141a70"/><stop offset="0.62" stop-color="#2a38c0"/><stop offset="1" stop-color="#1a1a90"/></linearGradient>
<radialGradient id="t13b" cx="0.5" cy="0.5" r="0.5"><stop offset="0" stop-color="#fff"/><stop offset="0.3" stop-color="#f0c0f0"/><stop offset="1" stop-color="#c02080" stop-opacity="0"/></radialGradient>
<filter id="bl13"><feGaussianBlur stdDeviation="0.7"/></filter>
</defs>
<rect width="85" height="48" fill="url(#t13a)"/>
<g filter="url(#bl13)">
<g fill="#8aa0ff" opacity="0.7"><circle cx="10" cy="8" r="1"/><circle cx="22" cy="14" r="1.2"/><circle cx="60" cy="6" r="1"/><circle cx="72" cy="16" r="1.3"/><circle cx="48" cy="10" r="0.9"/><circle cx="35" cy="18" r="1"/></g>
<rect x="2" y="22" width="28" height="3" fill="#8ab0ff" opacity="0.7"/>
<rect x="58" y="21" width="26" height="4" fill="#7a90ff" opacity="0.6"/>
<rect x="28" y="18" width="6" height="5" fill="#ff3080" opacity="0.85"/>
<rect x="52" y="19" width="4" height="4" fill="#ff4090" opacity="0.7"/>
<path d="M38 30 L42 48 L50 48 L47 30Z" fill="#ff40a0" opacity="0.5"/>
<path d="M10 30 L6 48 L14 48 L16 30Z" fill="#50a0ff" opacity="0.45"/>
<path d="M68 30 L72 48 L78 48 L72 30Z" fill="#50a0ff" opacity="0.45"/>
</g>
<ellipse cx="44" cy="24" rx="9" ry="7" fill="url(#t13b)"/>
<rect x="43" y="22" width="3" height="9" fill="#101040"/>
<rect x="64" y="0" width="1.8" height="42" fill="#0a0a30" opacity="0.7"/></svg>
<div class="a t lbl" style="left:346.0px;top:346.5px">MorphsWalls_013<br>.jpg</div>
<div class="a" style="left:460.4px;top:301.4px;width:89.5px;height:28.6px;background:#1f1f1f;border-radius:1px"></div>
<svg class="a" style="left:461.6px;top:294.7px" width="84.9" height="47.6" viewBox="0 0 85 48" preserveAspectRatio="none">
<defs>
<linearGradient id="t14a" x1="0" y1="0" x2="0" y2="1"><stop offset="0" stop-color="#010208"/><stop offset="0.35" stop-color="#081020"/><stop offset="0.65" stop-color="#18243a"/><stop offset="1" stop-color="#0a1220"/></linearGradient>
<linearGradient id="t14b" x1="0" y1="0" x2="0" y2="1"><stop offset="0" stop-color="#c8c8f0"/><stop offset="1" stop-color="#6a6aa0"/></linearGradient>
</defs>
<rect width="85" height="48" fill="url(#t14a)"/>
<path d="M2 20 L26 15 L28 20 L4 26Z" fill="#7a7aa8" opacity="0.75"/>
<path d="M22 25 L48 16 L53 21 L27 32Z" fill="url(#t14b)"/>
<path d="M22 25 L27 32 L27 35 L22 28Z" fill="#303050"/>
<path d="M43 30 L58 18 L63 20 L48 36Z" fill="url(#t14b)"/>
<path d="M51 38 L63 22 L68 24 L56 42Z" fill="url(#t14b)"/>
<circle cx="70" cy="16" r="2" fill="#2a3a5a"/><circle cx="78" cy="20" r="2.5" fill="#2a3a5a"/></svg>
<div class="a t lbl" style="left:456.0px;top:346.5px">MorphsWalls_014<br>.jpg</div>
</div>
 <div id="ctrack" class="a"><div class="a" style="left:5px;top:15px;width:1.5px;height:32px;background:#a0a0a0"></div></div>
<div id="details" class="a">
 <svg class="a" style="left:21px;top:5px" width="34" height="46" viewBox="0 0 34 46">
  <defs><linearGradient id="df1" x1="0" x2="0.4" y1="0" y2="1"><stop offset="0" stop-color="#a0a0a2"/><stop offset="0.45" stop-color="#5a5a5c"/><stop offset="1" stop-color="#222"/></linearGradient>
  <linearGradient id="df2" x1="0" x2="1" y1="0" y2="0"><stop offset="0" stop-color="#1a1a1a"/><stop offset="1" stop-color="#0a0a0a"/></linearGradient></defs>
  <path d="M1 1 L28 5 Q31 5.5 31 8 L31 36 L33 38 L33 44 L12 42 Z" fill="url(#df2)"/>
  <path d="M1 1 L12 6 L12 45 L1 39 Z" fill="url(#df1)"/>
  <path d="M1 22 L12 16 L12 30 Z" fill="#3a3a3c" opacity="0.6"/>
  <path d="M1 28 L12 36 L12 45 L1 39 Z" fill="#2a2a2a" opacity="0.5"/>
 </svg>
 <div class="a t" style="left:79px;top:7px;font-size:12px;line-height:15px;color:#333">160 items</div>
</div>
<div id="status" class="a">
 <div class="a t" style="left:9px;top:4px;font-size:11px;line-height:14px;color:#333">160 items</div>
 <div class="a" style="left:68px;top:3px;width:1px;height:16px;background:#9a9a9a"></div>
 <div class="a" style="left:677px;top:3px;width:1px;height:16px;background:#9a9a9a"></div>
 <svg class="a" style="left:687px;top:5px" width="14" height="12" viewBox="0 0 14 12"><path d="M1 2.5H12.5M1 5.5H12.5M1 8.5H12.5M1 11.3H12.5" stroke="#555" stroke-width="0.9"/></svg>
 <div class="a" style="left:705px;top:-1px;width:23px;height:22px;background:#cce4f7;border:1px solid #99c9ef"></div>
 <svg class="a" style="left:710px;top:4px" width="14" height="14" viewBox="0 0 14 14"><rect x="2.5" y="1.5" width="10" height="9" rx="0.8" fill="#fff" stroke="#444" stroke-width="1"/><path d="M2.5 12.5H12.5" stroke="#8a8a8a" stroke-width="1"/></svg>
</div>
</div>

<div id="taskbar" class="a">
 <svg class="a" style="left:439px;top:0px" width="40" height="32" viewBox="0 0 40 32">
  <defs><radialGradient id="al" cx="0.45" cy="0.3" r="0.7"><stop offset="0" stop-color="#bfe6ff"/><stop offset="0.4" stop-color="#36a8f0"/><stop offset="1" stop-color="#0a5ab0"/></radialGradient></defs>
  <circle cx="19" cy="19" r="18.5" fill="#d0d6de"/>
  <circle cx="19" cy="19" r="17.3" fill="#2a2a2c"/>
  <circle cx="19" cy="19" r="13.5" fill="#3a3a3c"/>
  <path d="M19 4 Q29 4 29 16 Q29 26 19 33 Q9 26 9 16 Q9 4 19 4Z" fill="url(#al)"/>
  <path d="M11 19 Q15 19 17 24 Q13 24 11 19Z M27 19 Q23 19 21 24 Q25 24 27 19Z" fill="#062a50"/>
 </svg>
 <div class="a" style="left:486px;top:0px;width:45px;height:32px;background:#d4d4d4;border:1px solid #e6e6e6;border-bottom:none"></div>
 <svg class="a" style="left:496px;top:8px" width="25" height="24" viewBox="0 0 25 24">
  <path d="M1 2 Q1 1 2 1 L8 1 L10.5 3 L23 3 Q24 3 24 4 L24 20 L1 20 Z" fill="#e8a917"/>
  <path d="M1 5 L24 5 L24 20 Q24 21 23 21 L2 21 Q1 21 1 20 Z" fill="#fcd05a"/>
  <rect x="5" y="13" width="15" height="8" rx="1.5" fill="#1a7ad4"/>
  <path d="M8 16.5 H17" stroke="#0a4a90" stroke-width="1"/>
 </svg>
 <svg class="a" style="left:833px;top:14px" width="12" height="8" viewBox="0 0 12 8"><path d="M1.5 6.5L6 2L10.5 6.5" fill="none" stroke="#444" stroke-width="1"/></svg>
 <svg class="a" style="left:855px;top:12px" width="16" height="16" viewBox="0 0 16 16">
  <path d="M1.5 5.5H4L8 2V13L4 9.5H1.5Z" fill="none" stroke="#222" stroke-width="1.1"/>
  <circle cx="10.5" cy="10.5" r="4.2" fill="#222"/>
  <path d="M8.8 8.8L12.2 12.2M12.2 8.8L8.8 12.2" stroke="#fff" stroke-width="1.1"/>
 </svg>
 <svg class="a" style="left:876px;top:10px" width="17" height="17" viewBox="0 0 17 17">
  <rect x="1" y="3" width="11" height="9" fill="none" stroke="#222" stroke-width="1.2"/>
  <path d="M4 15H10M7 12V15" stroke="#222" stroke-width="1.2"/>
  <rect x="12.5" y="1" width="3.5" height="5" fill="none" stroke="#222" stroke-width="1"/>
  <path d="M14.2 6V15" stroke="#222" stroke-width="1"/>
 </svg>
 <div class="a" style="left:896px;top:4px;width:58px;text-align:center;font-size:10px;line-height:13.5px;color:#333">7:34 PM<br>11/15/2025</div>
 <div class="a" style="left:963px;top:0;width:2px;height:32px;background:#2a2a2a"></div>
</div>
</body></html>
